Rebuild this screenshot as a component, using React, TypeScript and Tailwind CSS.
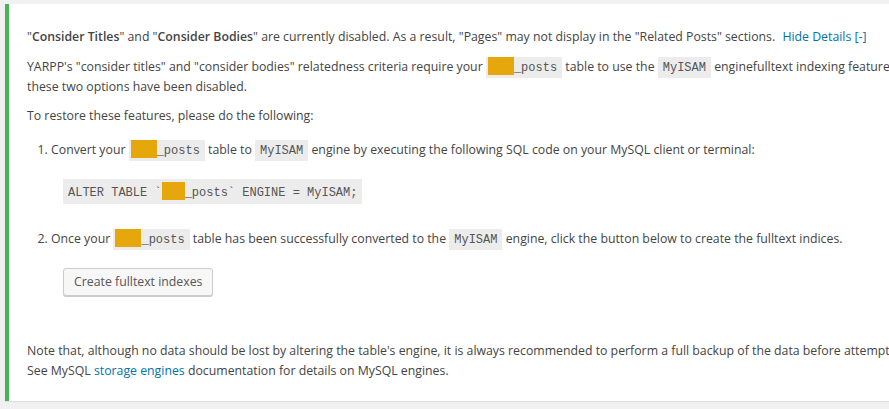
import React from "react"

function Redact({ w = 26 }: { w?: number }) {
  return (
    <span
      className="inline-block h-[18px] bg-[#e6a70c] align-[-4px]"
      style={{ width: w }}
    />
  )
}

function Code({ children, tight = false }: { children: React.ReactNode; tight?: boolean }) {
  return (
    <code
      className={`bg-[#ececec] ${tight ? "pl-[2px]" : "pl-[5px]"} pr-[5px] pt-[4px] pb-[3px] font-['Liberation_Mono',monospace] text-[12px] leading-[12px] text-[#555]`}
    >
      {children}
    </code>
  )
}

export default function App() {
  return (
    <div className="h-[409px] w-full overflow-hidden bg-[#f1f1f1] pt-[4px] pl-[5px] font-['Open_Sans',sans-serif] text-[12.3px] leading-[19.5px] text-[#444]">
      <div className="w-[1000px] border-l-4 border-[#46b450] bg-white pl-[18px] pt-[23px] pb-[21px] shadow-[0_1px_1px_rgba(0,0,0,0.08)] whitespace-nowrap">
        <p>
          "<strong className="font-semibold">Consider Titles</strong>" and "
          <strong className="font-semibold">Consider Bodies</strong>" are currently disabled. As a result, "Pages"
          may not display in the "Related Posts" sections.{" "}
          <a className="ml-1 text-[#0073aa]">Hide Details [-]</a>
        </p>
        <p className="mt-[10.5px]">
          YARPP's "consider titles" and "consider bodies" relatedness criteria require your{" "}
          <Code tight>
            <Redact />_posts
          </Code>{" "}
          table to use the <Code>MyISAM</Code> enginefulltext indexing features. Because your table uses another engine,
          <br />
          these two options have been disabled.
        </p>
        <p className="mt-[10px]">To restore these features, please do the following:</p>
        <ol className="mt-[14px] list-decimal pl-[24px]">
          <li>
            Convert your{" "}
            <Code tight>
              <Redact />_posts
            </Code>{" "}
            table to <Code>MyISAM</Code> engine by executing the following SQL code on your MySQL client or terminal:
            <div className="mt-[20px] ml-[12px] w-fit bg-[#ececec] px-[5px] pt-[3px] pb-[2px] font-['Liberation_Mono',monospace] text-[12px] leading-[18px] text-[#555]">
              ALTER TABLE `<Redact w={23} />_posts` ENGINE = MyISAM;
            </div>
          </li>
          <li className="mt-[25px]">
            Once your{" "}
            <Code tight>
              <Redact />_posts
            </Code>{" "}
            table has been successfully converted to the <Code>MyISAM</Code> engine, click the button below to create the
            fulltext indices.
            <div className="mt-[19.5px] ml-[12px] flex">
              <button className="h-[28px] rounded-[3px] border border-[#cccccc] bg-[#f7f7f7] px-[10px] pb-[1px] text-[12.3px] text-[#555] shadow-[0_1px_0_#cccccc]">
                Create fulltext indexes
              </button>
            </div>
          </li>
        </ol>
        <p className="mt-[45px]">
          Note that, although no data should be lost by altering the table's engine, it is always recommended to perform a
          full backup of the data before attempting to alter the engine.
          <br />
          See MySQL <a className="text-[#0073aa]">storage engines</a> documentation for details on MySQL engines.
        </p>
      </div>
    </div>
  )
}
